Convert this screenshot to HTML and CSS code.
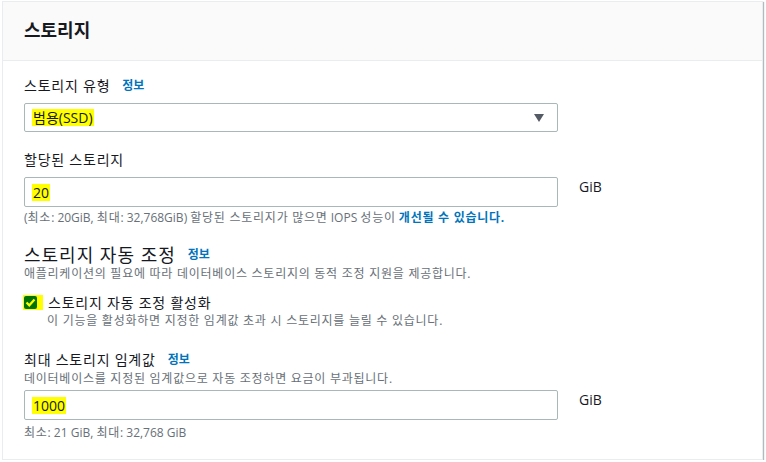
FILE: index.html
```html
<!DOCTYPE html>
<html lang="ko">
<head>
<meta charset="utf-8">
<link rel="stylesheet" href="styles.css">
</head>
<body>
<div class="panel">
  <div class="panel-header"><h2 class="title">스토리지</h2></div>
  <div class="panel-body">
    <div class="label-row l1"><span class="label ko">스토리지 유형</span><a class="info">정보</a></div>
    <div class="select">
      <span class="hl">범용(SSD)</span>
      <svg class="caret" width="10" height="8" viewBox="0 0 10 8"><path d="M0 0H10L5 8Z" fill="#545b64"/></svg>
    </div>

    <div class="label-row l2"><span class="label ko">할당된 스토리지</span></div>
    <div class="field-row">
      <div class="input"><span class="hl">20</span></div>
      <span class="unit">GiB</span>
    </div>
    <div class="hint h1">(<span class="ko">최소</span>: 20GiB, <span class="ko">최대</span>: 32,768GiB) <span class="ko">할당된 스토리지가 많으면</span> IOPS <span class="ko">성능이</span> <b class="strong-link ko">개선될 수 있습니다.</b></div>

    <div class="section-head"><span class="heading ko">스토리지 자동 조정</span><a class="info">정보</a></div>
    <div class="hint desc ko">애플리케이션의 필요에 따라 데이터베이스 스토리지의 동적 조정 지원을 제공합니다.</div>

    <div class="check-row">
      <span class="check-hl"><span class="checkbox"><svg width="13" height="13" viewBox="0 0 13 13"><path d="M2.5 6.5L5.3 9.3L10.5 3.6" fill="none" stroke="#ffff00" stroke-width="2.2"/></svg></span></span>
      <span class="check-label ko">스토리지 자동 조정 활성화</span>
    </div>
    <div class="hint sub ko">이 기능을 활성화하면 지정한 임계값 초과 시 스토리지를 늘릴 수 있습니다.</div>

    <div class="label-row l3"><span class="label ko">최대 스토리지 임계값</span><a class="info">정보</a></div>
    <div class="hint ko">데이터베이스를 지정된 임계값으로 자동 조정하면 요금이 부과됩니다.</div>
    <div class="field-row f3">
      <div class="input"><span class="hl">1000</span></div>
      <span class="unit">GiB</span>
    </div>
    <div class="hint h3"><span class="ko">최소</span>: 21 GiB, <span class="ko">최대</span>: 32,768 GiB</div>
  </div>
</div>
</body>
</html>
```

FILE: styles.css
```css
* { box-sizing: border-box; }
html, body { margin: 0; padding: 0; background: #fff; }
body {
  font-family: "Open Sans", "Noto Sans CJK KR", sans-serif;
  color: #16191f;
  font-size: 14px;
}
.ko { letter-spacing: 0.055em; }
.hint .ko, .hint.ko { letter-spacing: 0.062em; }
.panel {
  margin: 1px 0 0 2px;
  width: 761px;
  border: 1px solid #eaeded;
  box-shadow: 1px 1px 1px rgba(0, 28, 36, 0.3);
  background: #fff;
}
.panel-header {
  height: 59px;
  background: #fafafa;
  border-bottom: 1px solid #eaeded;
  display: flex;
  align-items: center;
  padding-left: 21px;
}
.title {
  margin: 0;
  font-size: 18px;
  font-weight: 700;
  line-height: 24px;
  margin-top: -2px;
}
.panel-body {
  padding: 14px 0 18px 21px;
  display: flex;
  flex-direction: column;
  align-items: flex-start;
}
.label-row { display: flex; align-items: center; line-height: 22px; height: 22px; }
.label { font-size: 14px; }
.info {
  font-size: 12px;
  font-weight: 700;
  color: #0073bb;
  margin-left: 12px;
  letter-spacing: 0;
}
.l2 { margin-top: 17px; }
.l3 { margin-top: 20px; }
.select {
  margin-top: 6px;
  width: 534px;
  height: 29px;
  border: 1px solid #aab7b8;
  border-radius: 2px;
  display: flex;
  align-items: center;
  justify-content: space-between;
  padding: 0 13px 0 7px;
  font-size: 14px;
}
.hl { background: #ffff00; padding: 0 1px; line-height: 17px; }
.field-row { display: flex; align-items: flex-start; margin-top: 6px; }
.f3 { margin-top: 3px; }
.input {
  width: 534px;
  height: 30px;
  border: 1px solid #aab7b8;
  border-radius: 2px;
  display: flex;
  align-items: center;
  padding-left: 7px;
  font-size: 14px;
}
.unit { margin-left: 21px; line-height: 20px; font-size: 14px; }
.hint {
  font-size: 12px;
  line-height: 16px;
  color: #687078;
}
.h1 { margin-top: 3px; }
.h3 { margin-top: 5px; }
.strong-link { color: #0073bb; font-weight: 700; }
.section-head { display: flex; align-items: center; margin-top: 19px; height: 20px; line-height: 20px; }
.heading { font-size: 18px; }
.desc { line-height: 14px; margin-top: 2px; }
.check-row { display: flex; align-items: center; margin-top: 11px; height: 20px; }
.check-hl {
  background: #ffff00;
  width: 20px;
  height: 15px;
  display: flex;
  align-items: center;
  padding-left: 1px;
  margin-left: -1px;
}
.checkbox {
  width: 13px;
  height: 13px;
  background: #007300;
  border-radius: 2px;
  display: block;
}
.checkbox svg { display: block; }
.check-label { margin-left: 5px; font-size: 14px; }
.sub { margin-left: 23px; margin-top: 1px; }
```
